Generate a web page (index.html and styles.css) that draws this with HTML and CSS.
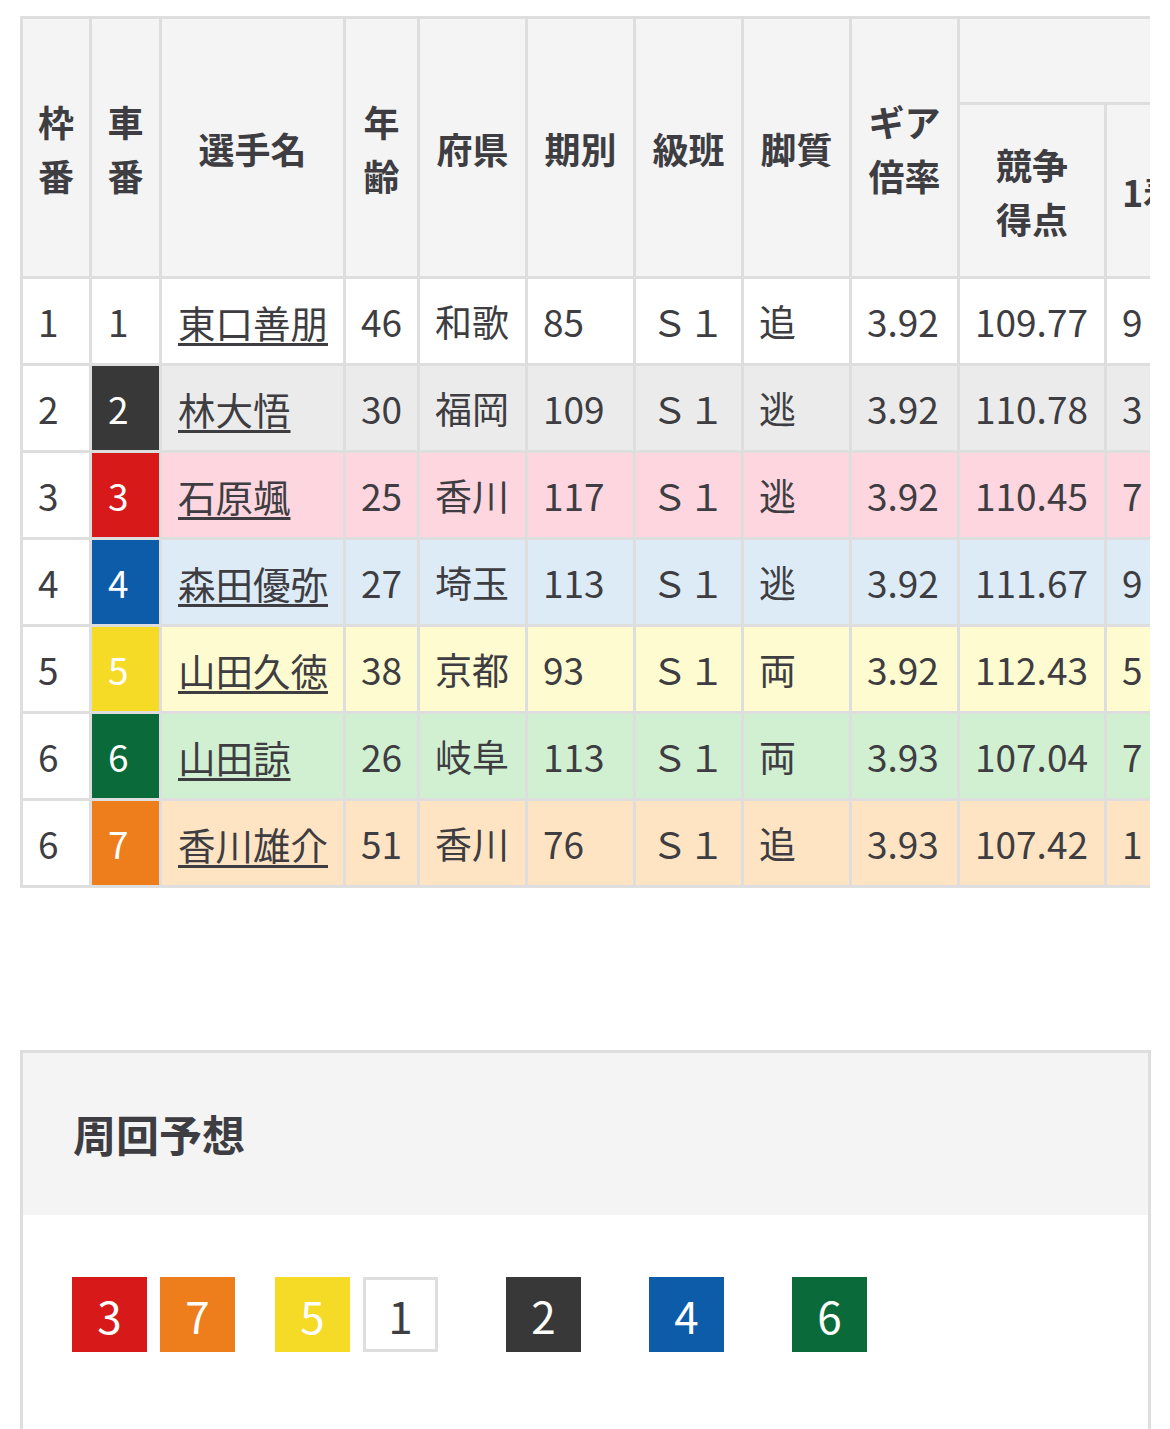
FILE: index.html
```html
<!DOCTYPE html>
<html lang="ja">
<head>
<meta charset="utf-8">
<title>出走表</title>
<link rel="stylesheet" href="styles.css">
</head>
<body>
<div class="page">
  <div class="table-wrap">
    <table class="entry">
      <colgroup>
        <col class="c-waku"><col class="c-sha"><col class="c-name"><col class="c-age">
        <col class="c-std"><col class="c-std"><col class="c-std"><col class="c-std"><col class="c-std">
        <col class="c-score"><col class="c-rank">
      </colgroup>
      <thead>
        <tr class="h1">
          <th rowspan="2">枠<br>番</th>
          <th rowspan="2">車<br>番</th>
          <th rowspan="2">選手名</th>
          <th rowspan="2">年<br>齢</th>
          <th rowspan="2">府県</th>
          <th rowspan="2">期別</th>
          <th rowspan="2">級班</th>
          <th rowspan="2">脚質</th>
          <th rowspan="2">ギア<br>倍率</th>
          <th colspan="2" class="group"></th>
        </tr>
        <tr class="h2">
          <th>競争<br>得点</th>
          <th>1着</th>
        </tr>
      </thead>
      <tbody>
        <tr class="r1">
          <td class="waku">1</td><td class="sha s1">1</td><td class="nm"><a href="#">東口善朋</a></td><td>46</td><td>和歌</td><td>85</td><td>Ｓ１</td><td>追</td><td>3.92</td><td>109.77</td><td>9</td>
        </tr>
        <tr class="r2">
          <td class="waku">2</td><td class="sha s2">2</td><td class="nm"><a href="#">林大悟</a></td><td>30</td><td>福岡</td><td>109</td><td>Ｓ１</td><td>逃</td><td>3.92</td><td>110.78</td><td>3</td>
        </tr>
        <tr class="r3">
          <td class="waku">3</td><td class="sha s3">3</td><td class="nm"><a href="#">石原颯</a></td><td>25</td><td>香川</td><td>117</td><td>Ｓ１</td><td>逃</td><td>3.92</td><td>110.45</td><td>7</td>
        </tr>
        <tr class="r4">
          <td class="waku">4</td><td class="sha s4">4</td><td class="nm"><a href="#">森田優弥</a></td><td>27</td><td>埼玉</td><td>113</td><td>Ｓ１</td><td>逃</td><td>3.92</td><td>111.67</td><td>9</td>
        </tr>
        <tr class="r5">
          <td class="waku">5</td><td class="sha s5">5</td><td class="nm"><a href="#">山田久徳</a></td><td>38</td><td>京都</td><td>93</td><td>Ｓ１</td><td>両</td><td>3.92</td><td>112.43</td><td>5</td>
        </tr>
        <tr class="r6">
          <td class="waku">6</td><td class="sha s6">6</td><td class="nm"><a href="#">山田諒</a></td><td>26</td><td>岐阜</td><td>113</td><td>Ｓ１</td><td>両</td><td>3.93</td><td>107.04</td><td>7</td>
        </tr>
        <tr class="r7">
          <td class="waku">6</td><td class="sha s7">7</td><td class="nm"><a href="#">香川雄介</a></td><td>51</td><td>香川</td><td>76</td><td>Ｓ１</td><td>追</td><td>3.93</td><td>107.42</td><td>1</td>
        </tr>
      </tbody>
    </table>
  </div>

  <section class="lap">
    <div class="lap-head"><h2>周回予想</h2></div>
    <div class="lap-body">
      <div class="grp gap-s"><span class="bdg s3">3</span><span class="bdg s7">7</span></div>
      <div class="grp gap-l"><span class="bdg s5">5</span><span class="bdg s1">1</span></div>
      <div class="grp gap-l"><span class="bdg s2">2</span></div>
      <div class="grp gap-l"><span class="bdg s4">4</span></div>
      <div class="grp"><span class="bdg s6">6</span></div>
    </div>
  </section>
</div>
</body>
</html>
```

FILE: styles.css
```css
* { box-sizing: border-box; }
html, body { margin: 0; padding: 0; background: #fff; }
body {
  font-family: "Noto Sans CJK JP", "Noto Sans", sans-serif;
  color: #3d3d42;
}
.page { padding: 16px 20px 0 20px; }

.table-wrap {
  width: 1130px;
  overflow: hidden;
}
.entry {
  table-layout: fixed;
  width: 1177px;
  border-collapse: separate;
  border-spacing: 0;
  border-left: 3px solid #dedede;
  border-top: 3px solid #dedede;
}
.c-waku { width: 69px; }
.c-sha { width: 70px; }
.c-name { width: 184px; }
.c-age { width: 74px; }
.c-std { width: 108px; }
.c-score { width: 147px; }
.c-rank { width: 90px; }

.entry th, .entry td {
  border-right: 3px solid #dedede;
  border-bottom: 3px solid #dedede;
  padding: 0;
  vertical-align: middle;
  white-space: nowrap;
}
.entry th {
  background: #f4f4f4;
  font-size: 36px;
  font-weight: 700;
  line-height: 54px;
  text-align: center;
}
.entry tr.h1 { height: 86px; }
.entry tr.h2 { height: 174px; }
.entry tbody tr { height: 87px; }
.entry td {
  font-size: 37px;
  line-height: 1.2;
  padding-left: 15px;
  text-align: left;
}
.entry td.nm { font-size: 37.5px; padding-left: 16px; }
.entry td a {
  color: #3d3d42;
  text-decoration: underline;
  text-decoration-thickness: 3px;
  text-underline-offset: 5px;
}
.entry td.waku { background: #fff; }
.entry td.sha { padding-left: 16px; color: #fff; }
.entry td.sha.s1 { color: #3d3d42; }

.r1 td { background: #ffffff; }
.r2 td { background: #ebebeb; }
.r3 td { background: #fed6df; }
.r4 td { background: #ddebf7; }
.r5 td { background: #fffbd0; }
.r6 td { background: #d1efd1; }
.r7 td { background: #ffe4c3; }

.entry td.s1 { background: #ffffff; }
.entry td.s2, .bdg.s2 { background: #383838; }
.entry td.s3, .bdg.s3 { background: #d7191a; }
.entry td.s4, .bdg.s4 { background: #0d5caa; }
.entry td.s5, .bdg.s5 { background: #f5da26; }
.entry td.s6, .bdg.s6 { background: #0a6a3a; }
.entry td.s7, .bdg.s7 { background: #ee7d1c; }

.lap {
  margin-top: 162px;
  width: 1131px;
  border: 3px solid #dedede;
  border-bottom: none;
}
.lap-head {
  height: 162px;
  background: #f4f4f4;
  display: flex;
  align-items: center;
  padding-left: 50px;
}
.lap-head h2 {
  margin: 0;
  font-size: 43px;
  font-weight: 700;
  line-height: 1.2;
}
.lap-body {
  display: flex;
  padding: 62px 0 120px 49px;
  background: #fff;
}
.grp { display: flex; gap: 13px; }
.gap-s { margin-right: 40px; }
.gap-l { margin-right: 68px; }
.bdg {
  width: 75px;
  height: 75px;
  display: flex;
  align-items: center;
  justify-content: center;
  font-size: 44px;
  line-height: 1;
  color: #fff;
}
.bdg.s1 {
  background: #fff;
  border: 3px solid #dedede;
  color: #3d3d42;
}
```
